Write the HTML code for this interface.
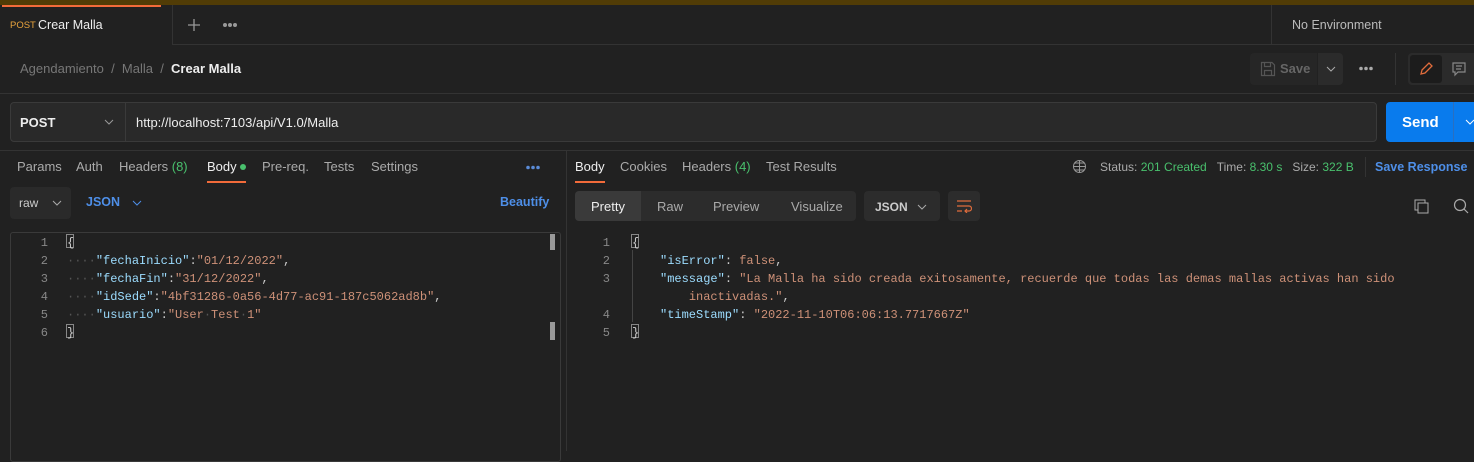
<!DOCTYPE html>
<html><head><meta charset="utf-8"><style>
*{margin:0;padding:0;box-sizing:border-box}
body{width:1474px;height:451px;background:#212121;font-family:"Liberation Sans",sans-serif;color:#ccc;position:relative;overflow:hidden;font-size:13px}
.a{position:absolute;white-space:nowrap}
.hl{position:absolute;height:1px;background:#333}
.vl{position:absolute;width:1px;background:#333}
.mono{font-family:"Liberation Mono",monospace;font-size:12px}
.k{color:#9cdcfe}.s{color:#ce9178}.d{color:#555}
.bx{position:absolute;border:1px solid #888;width:8px;height:14px}
.t{position:absolute;top:159px;color:#aaa;white-space:nowrap}
</style></head><body>
<div class="a" style="left:0;top:0;width:1474px;height:5px;background:#513c06"></div>
<div class="a" style="left:2px;top:5px;width:159px;height:2px;background:#f26b3a"></div>
<div class="a" style="left:10px;top:20px;font-size:9.5px;color:#e8a33d">POST</div>
<div class="a" style="left:38px;top:18px;font-size:12.5px;color:#eee">Crear Malla</div>
<div class="vl" style="left:172px;top:5px;height:39px"></div>
<svg class="a" style="left:187px;top:18px" width="14" height="14"><path d="M7 1V13M1 7H13" stroke="#999" stroke-width="1.3"/></svg>
<svg class="a" style="left:222px;top:22px" width="16" height="6"><circle cx="3" cy="3" r="2" fill="#999"/><circle cx="8" cy="3" r="2" fill="#999"/><circle cx="13" cy="3" r="2" fill="#999"/></svg>
<div class="vl" style="left:1271px;top:5px;height:39px"></div>
<div class="a" style="left:1292px;top:18px;color:#bbb;font-size:12.5px">No Environment</div>
<div class="hl" style="left:172px;top:44px;width:1302px"></div>
<div class="a" style="left:20px;top:61px;color:#777">Agendamiento&nbsp; / &nbsp;Malla&nbsp; / &nbsp;<b style="color:#eee">Crear Malla</b></div>
<div class="a" style="left:1250px;top:53px;width:67px;height:32px;background:#262626;border-radius:4px 0 0 4px"></div>
<div class="a" style="left:1318px;top:53px;width:25px;height:32px;background:#2b2b2b;border-radius:0 4px 4px 0"></div>
<svg class="a" style="left:1260px;top:61px" width="16" height="16"><path d="M1.5 1.5H12L14.5 4V14.5H1.5Z M4.5 1.5V5.5H10.5V1.5 M4.5 14.5V9.5H11.5V14.5" fill="none" stroke="#555" stroke-width="1.2"/></svg>
<div class="a" style="left:1280px;top:61px;color:#666;font-weight:bold">Save</div>
<svg class="a" style="left:1326px;top:66px" width="10" height="6"><path d="M1 1L5 5L9 1" stroke="#aaa" fill="none"/></svg>
<svg class="a" style="left:1359px;top:66px" width="14" height="5"><circle cx="2" cy="2.5" r="1.8" fill="#aaa"/><circle cx="7" cy="2.5" r="1.8" fill="#aaa"/><circle cx="12" cy="2.5" r="1.8" fill="#aaa"/></svg>
<div class="vl" style="left:1395px;top:53px;height:32px"></div>
<div class="a" style="left:1408px;top:53px;width:70px;height:32px;background:#2b2b2b;border-radius:4px"></div>
<div class="a" style="left:1410px;top:55px;width:32px;height:28px;background:#1c1c1c;border-radius:3px"></div>
<svg class="a" style="left:1418px;top:61px" width="16" height="16"><path d="M3 13 L4 9 L11 2 L14 5 L7 12 Z" fill="none" stroke="#e06c3c" stroke-width="1.3"/></svg>
<svg class="a" style="left:1451px;top:61px" width="16" height="16"><path d="M2 2 H14 V11 H7 L4 14 V11 H2 Z M5 5 H11 M5 8 H10" fill="none" stroke="#888" stroke-width="1.2"/></svg>
<div class="hl" style="left:0;top:93px;width:1474px"></div>
<div class="a" style="left:10px;top:102px;width:1367px;height:40px;background:#292929;border:1px solid #3a3a3a;border-radius:4px"></div>
<div class="vl" style="left:125px;top:103px;height:38px;background:#3a3a3a"></div>
<div class="a" style="left:20px;top:115px;font-weight:bold;color:#eee">POST</div>
<svg class="a" style="left:104px;top:119px" width="10" height="6"><path d="M1 1L5 5L9 1" stroke="#999" fill="none"/></svg>
<div class="a" style="left:136px;top:115px;color:#eee">http://localhost:7103/api/V1.0/Malla</div>
<div class="a" style="left:1386px;top:102px;width:90px;height:40px;background:#097bed;border-radius:4px 0 0 4px"></div>
<div class="a" style="left:1402px;top:114px;color:#fff;font-weight:bold;font-size:15px">Send</div>
<div class="vl" style="left:1453px;top:102px;height:40px;background:#2a6fc0"></div>
<svg class="a" style="left:1465px;top:119px" width="10" height="6"><path d="M1 1L5 5L9 1" stroke="#fff" fill="none"/></svg>
<div class="hl" style="left:0;top:150px;width:1474px"></div>
<div class="vl" style="left:566px;top:150px;height:301px"></div>
<div class="t" style="left:17px">Params</div>
<div class="t" style="left:76px">Auth</div>
<div class="t" style="left:119px">Headers <span style="color:#49c06d">(8)</span></div>
<div class="t" style="left:207px;color:#eee">Body</div>
<div class="a" style="left:240px;top:164px;width:6px;height:6px;border-radius:3px;background:#49c06d"></div>
<div class="a" style="left:207px;top:181px;width:39px;height:2px;background:#f26b3a"></div>
<div class="t" style="left:262px">Pre-req.</div>
<div class="t" style="left:324px">Tests</div>
<div class="t" style="left:371px">Settings</div>
<svg class="a" style="left:526px;top:165px" width="14" height="5"><circle cx="2" cy="2.5" r="1.8" fill="#5a8bd6"/><circle cx="7" cy="2.5" r="1.8" fill="#5a8bd6"/><circle cx="12" cy="2.5" r="1.8" fill="#5a8bd6"/></svg>
<div class="a" style="left:10px;top:187px;width:61px;height:32px;background:#2a2a2a;border-radius:4px"></div>
<div class="a" style="left:19px;top:196px;color:#ccc;font-size:12px">raw</div>
<svg class="a" style="left:52px;top:200px" width="10" height="6"><path d="M1 1L5 5L9 1" stroke="#aaa" fill="none"/></svg>
<div class="a" style="left:86px;top:195px;color:#4e8fe8;font-weight:bold;font-size:12.5px">JSON</div>
<svg class="a" style="left:132px;top:200px" width="10" height="6"><path d="M1 1L5 5L9 1" stroke="#4e8fe8" fill="none"/></svg>
<div class="a" style="left:500px;top:195px;color:#4e8fe8;font-weight:bold;font-size:12.5px">Beautify</div>
<div class="a" style="left:10px;top:232px;width:551px;height:230px;border:1px solid #3a3a3a;border-radius:3px"></div>
<div class="a" style="left:550px;top:234px;width:5px;height:16px;background:#999"></div>
<div class="a" style="left:550px;top:322px;width:5px;height:18px;background:#999"></div>
<div class="bx" style="left:66px;top:234px"></div><div class="bx" style="left:66px;top:324px"></div>
<div class="a mono" style="left:30px;top:234px;line-height:18px;text-align:right;width:18px;color:#888">1<br>2<br>3<br>4<br>5<br>6</div>
<div class="a mono" style="left:67px;top:234px;line-height:18px;color:#ccc">{<br><span class="d">····</span><span class="k">"fechaInicio"</span>:<span class="s">"01/12/2022"</span>,<br><span class="d">····</span><span class="k">"fechaFin"</span>:<span class="s">"31/12/2022"</span>,<br><span class="d">····</span><span class="k">"idSede"</span>:<span class="s">"4bf31286-0a56-4d77-ac91-187c5062ad8b"</span>,<br><span class="d">····</span><span class="k">"usuario"</span>:<span class="s">"User<span class="d">·</span>Test<span class="d">·</span>1"</span><br>}</div>
<div class="t" style="left:575px;color:#eee">Body</div>
<div class="a" style="left:575px;top:181px;width:30px;height:2px;background:#f26b3a"></div>
<div class="t" style="left:620px">Cookies</div>
<div class="t" style="left:682px">Headers <span style="color:#49c06d">(4)</span></div>
<div class="t" style="left:766px">Test Results</div>
<svg class="a" style="left:1072px;top:159px" width="15" height="15"><circle cx="7.5" cy="7.5" r="6" fill="none" stroke="#999"/><path d="M1.5 7.5H13.5M7.5 1.5V13.5M3 4H12M3 11H12" stroke="#999" fill="none"/></svg>
<div class="a" style="left:1100px;top:160px;font-size:12px;color:#aaa">Status: <span style="color:#49c06d">201 Created</span>&nbsp;&nbsp;&nbsp;Time: <span style="color:#49c06d">8.30 s</span>&nbsp;&nbsp;&nbsp;Size: <span style="color:#49c06d">322 B</span></div>
<div class="vl" style="left:1365px;top:157px;height:20px"></div>
<div class="a" style="left:1375px;top:160px;font-size:12.5px;color:#4e8fe8;font-weight:bold">Save Response</div>
<div class="a" style="left:575px;top:191px;width:281px;height:30px;background:#2c2c2c;border-radius:4px"></div>
<div class="a" style="left:575px;top:191px;width:66px;height:30px;background:#3a3a3a;border-radius:4px 0 0 4px"></div>
<div class="a" style="left:591px;top:199px;color:#eee">Pretty</div>
<div class="a" style="left:657px;top:199px;color:#aaa">Raw</div>
<div class="a" style="left:713px;top:199px;color:#aaa">Preview</div>
<div class="a" style="left:791px;top:199px;color:#aaa">Visualize</div>
<div class="a" style="left:864px;top:191px;width:76px;height:30px;background:#2c2c2c;border-radius:4px"></div>
<div class="a" style="left:875px;top:200px;color:#ccc;font-weight:bold;font-size:12px">JSON</div>
<svg class="a" style="left:917px;top:204px" width="10" height="6"><path d="M1 1L5 5L9 1" stroke="#aaa" fill="none"/></svg>
<div class="a" style="left:948px;top:191px;width:32px;height:30px;background:#2c2c2c;border-radius:4px"></div>
<svg class="a" style="left:956px;top:199px" width="16" height="14"><path d="M1 2H15M1 7H13a2.5 2.5 0 0 1 0 5H9M11 10L9 12L11 14M1 12H6" stroke="#e06c3c" fill="none" stroke-width="1.2"/></svg>
<svg class="a" style="left:1414px;top:199px" width="16" height="16"><rect x="1" y="1" width="10" height="10" fill="none" stroke="#aaa"/><rect x="4" y="4" width="10" height="10" fill="#212121" stroke="#aaa"/></svg>
<svg class="a" style="left:1453px;top:198px" width="18" height="18"><circle cx="7" cy="7" r="5.5" fill="none" stroke="#aaa" stroke-width="1.2"/><path d="M11 11L15 15" stroke="#aaa" stroke-width="1.2"/></svg>
<div class="bx" style="left:631px;top:234px"></div><div class="bx" style="left:631px;top:324px"></div>
<div class="vl" style="left:632px;top:250px;height:72px;background:#444"></div>
<div class="a mono" style="left:592px;top:234px;line-height:18px;text-align:right;width:18px;color:#888">1<br>2<br>3<br><br>4<br>5</div>
<div class="a mono" style="left:632px;top:234px;line-height:18px;color:#ccc">{</div>
<div class="a mono" style="left:660px;top:252px;line-height:18px;color:#ccc"><span class="k">"isError"</span>: <span class="s">false</span>,<br><span class="k">"message"</span>: <span class="s">"La Malla ha sido creada exitosamente, recuerde que todas las demas mallas activas han sido</span><br>&nbsp;&nbsp;&nbsp;&nbsp;<span class="s">inactivadas."</span>,<br><span class="k">"timeStamp"</span>: <span class="s">"2022-11-10T06:06:13.7717667Z"</span></div>
<div class="a mono" style="left:632px;top:324px;line-height:18px;color:#ccc">}</div>
</body></html>
